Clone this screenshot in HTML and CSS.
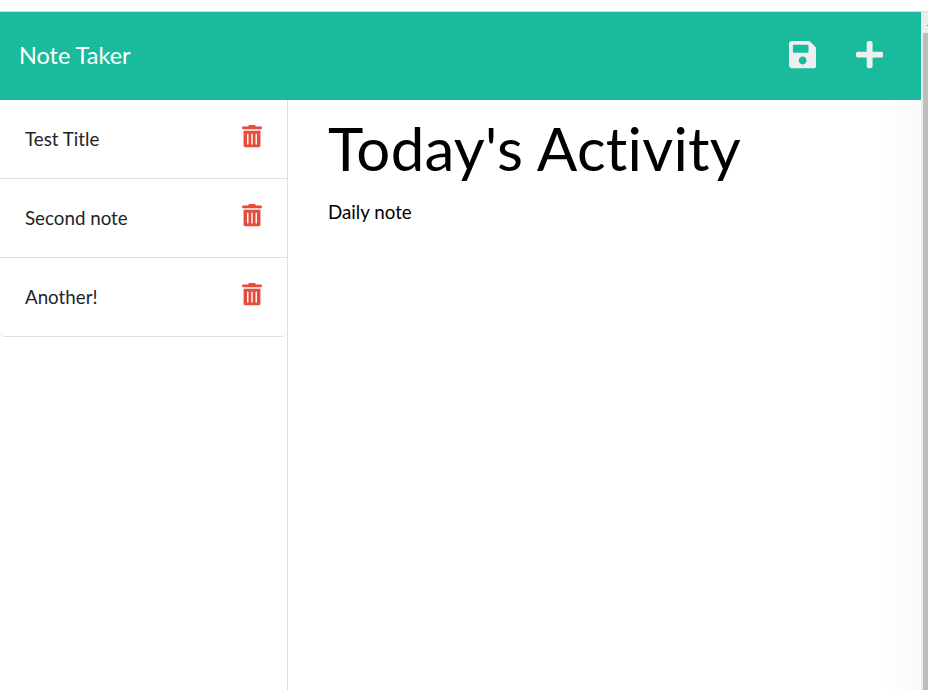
FILE: index.html
```html
<!DOCTYPE html>
<html lang="en">
<head>
<meta charset="utf-8">
<title>Note Taker</title>
<link rel="stylesheet" href="styles.css">
</head>
<body>
<svg class="sprite" aria-hidden="true">
  <symbol id="trash" viewBox="0 0 448 512"><path d="M32 464a48 48 0 0 0 48 48h288a48 48 0 0 0 48-48V128H32zm272-256a16 16 0 0 1 32 0v224a16 16 0 0 1-32 0zm-96 0a16 16 0 0 1 32 0v224a16 16 0 0 1-32 0zm-96 0a16 16 0 0 1 32 0v224a16 16 0 0 1-32 0zM432 32H312l-9.4-18.7A24 24 0 0 0 281.1 0H166.8a23.7 23.7 0 0 0-21.4 13.3L136 32H16A16 16 0 0 0 0 48v32a16 16 0 0 0 16 16h416a16 16 0 0 0 16-16V48a16 16 0 0 0-16-16z"/></symbol>
</svg>
<div class="window">
  <div class="page">
    <nav class="navbar">
      <a class="brand">Note Taker</a>
      <div class="actions">
        <svg class="action" viewBox="0 0 448 512"><path d="M433.9 129.9l-83.9-83.9A48 48 0 0 0 316.1 32H48C21.5 32 0 53.500 0 80v352c0 26.500 21.500 48 48 48h352c26.500 0 48-21.500 48-48V163.900a48 48 0 0 0-14.100-34zM224 416c-35.300 0-64-28.700-64-64s28.700-64 64-64 64 28.700 64 64-28.700 64-64 64zm96-304.500V212c0 6.600-5.400 12-12 12H76c-6.600 0-12-5.400-12-12V108c0-6.600 5.400-12 12-12h228.500c3.200 0 6.200 1.300 8.500 3.500l3.500 3.500A12 12 0 0 1 320 111.500z"/></svg>
        <svg class="action" viewBox="0 0 448 512"><path d="M416 208H272V64c0-17.700-14.300-32-32-32h-32c-17.700 0-32 14.300-32 32v144H32c-17.700 0-32 14.300-32 32v32c0 17.700 14.300 32 32 32h144v144c0 17.700 14.300 32 32 32h32c17.700 0 32-14.300 32-32V304h144c17.700 0 32-14.300 32-32v-32c0-17.700-14.300-32-32-32z"/></svg>
      </div>
    </nav>
    <div class="content">
      <aside class="sidebar">
        <ul class="notes">
          <li class="note"><span>Test Title</span><svg class="trash"><use href="#trash"/></svg></li>
          <li class="note"><span>Second note</span><svg class="trash"><use href="#trash"/></svg></li>
          <li class="note"><span>Another!</span><svg class="trash"><use href="#trash"/></svg></li>
        </ul>
      </aside>
      <main class="editor">
        <h1 class="title">Today's Activity</h1>
        <p class="text">Daily note</p>
      </main>
    </div>
  </div>
  <div class="scrollbar"><i class="arrow"></i><div class="thumb"></div></div>
</div>
</body>
</html>
```
FILE: styles.css
```css
* { box-sizing: border-box; }
body {
  margin: 0;
  height: 690px;
  padding-top: 11px;
  overflow: hidden;
  background: #fff;
  color: #212529;
  font: 18.75px/28px Lato, sans-serif;
  font-variant-ligatures: none;
}
.sprite { display: none; }
.window {
  display: flex;
  height: 679px;
  border-top: 1px solid #d9dfdd;
}
.page {
  flex: 1;
  display: flex;
  flex-direction: column;
}
.navbar {
  height: 88px;
  flex: none;
  display: flex;
  align-items: center;
  justify-content: space-between;
  padding: 0 38px 0 19px;
  background: #1abb9c;
}
.brand {
  margin-bottom: 2px;
  color: #fff;
  font-size: 23.44px;
  line-height: 35px;
}
.actions {
  display: flex;
  gap: 39.5px;
  margin-bottom: 2px;
}
.action {
  width: 27.34px;
  height: 31.25px;
  fill: #ecf0f1;
}
.content {
  flex: 1;
  display: flex;
}
.sidebar {
  width: 288px;
  border-right: 1px solid #dfdfdf;
}
.notes {
  margin: 0;
  padding: 0;
  list-style: none;
}
.note {
  height: 79px;
  display: flex;
  justify-content: space-between;
  align-items: flex-start;
  padding: 25px 25px 0;
  border-bottom: 1px solid #dfdfdf;
}
.note:last-child { border-radius: 0 0 5px 5px; }
.trash {
  width: 20px;
  height: 22.5px;
  fill: #e74c3c;
}
.editor {
  flex: 1;
  padding: 12px 0 0 40px;
  background: linear-gradient(to right, transparent 94%, #f9f9f9);
  color: #000;
}
.title {
  margin: 0;
  font-size: 60px;
  line-height: 72px;
  font-weight: 400;
  letter-spacing: 0.25px;
}
.text { margin: 14px 0 0; }
.scrollbar {
  width: 7px;
  padding: 21px 0 0 2px;
  background: #ececec;
  position: relative;
}
.arrow {
  position: absolute;
  top: 13px;
  right: 0;
  width: 1px;
  height: 1px;
  background: #777;
}
.thumb {
  height: 100%;
  background: #bdbdbd;
}
```
